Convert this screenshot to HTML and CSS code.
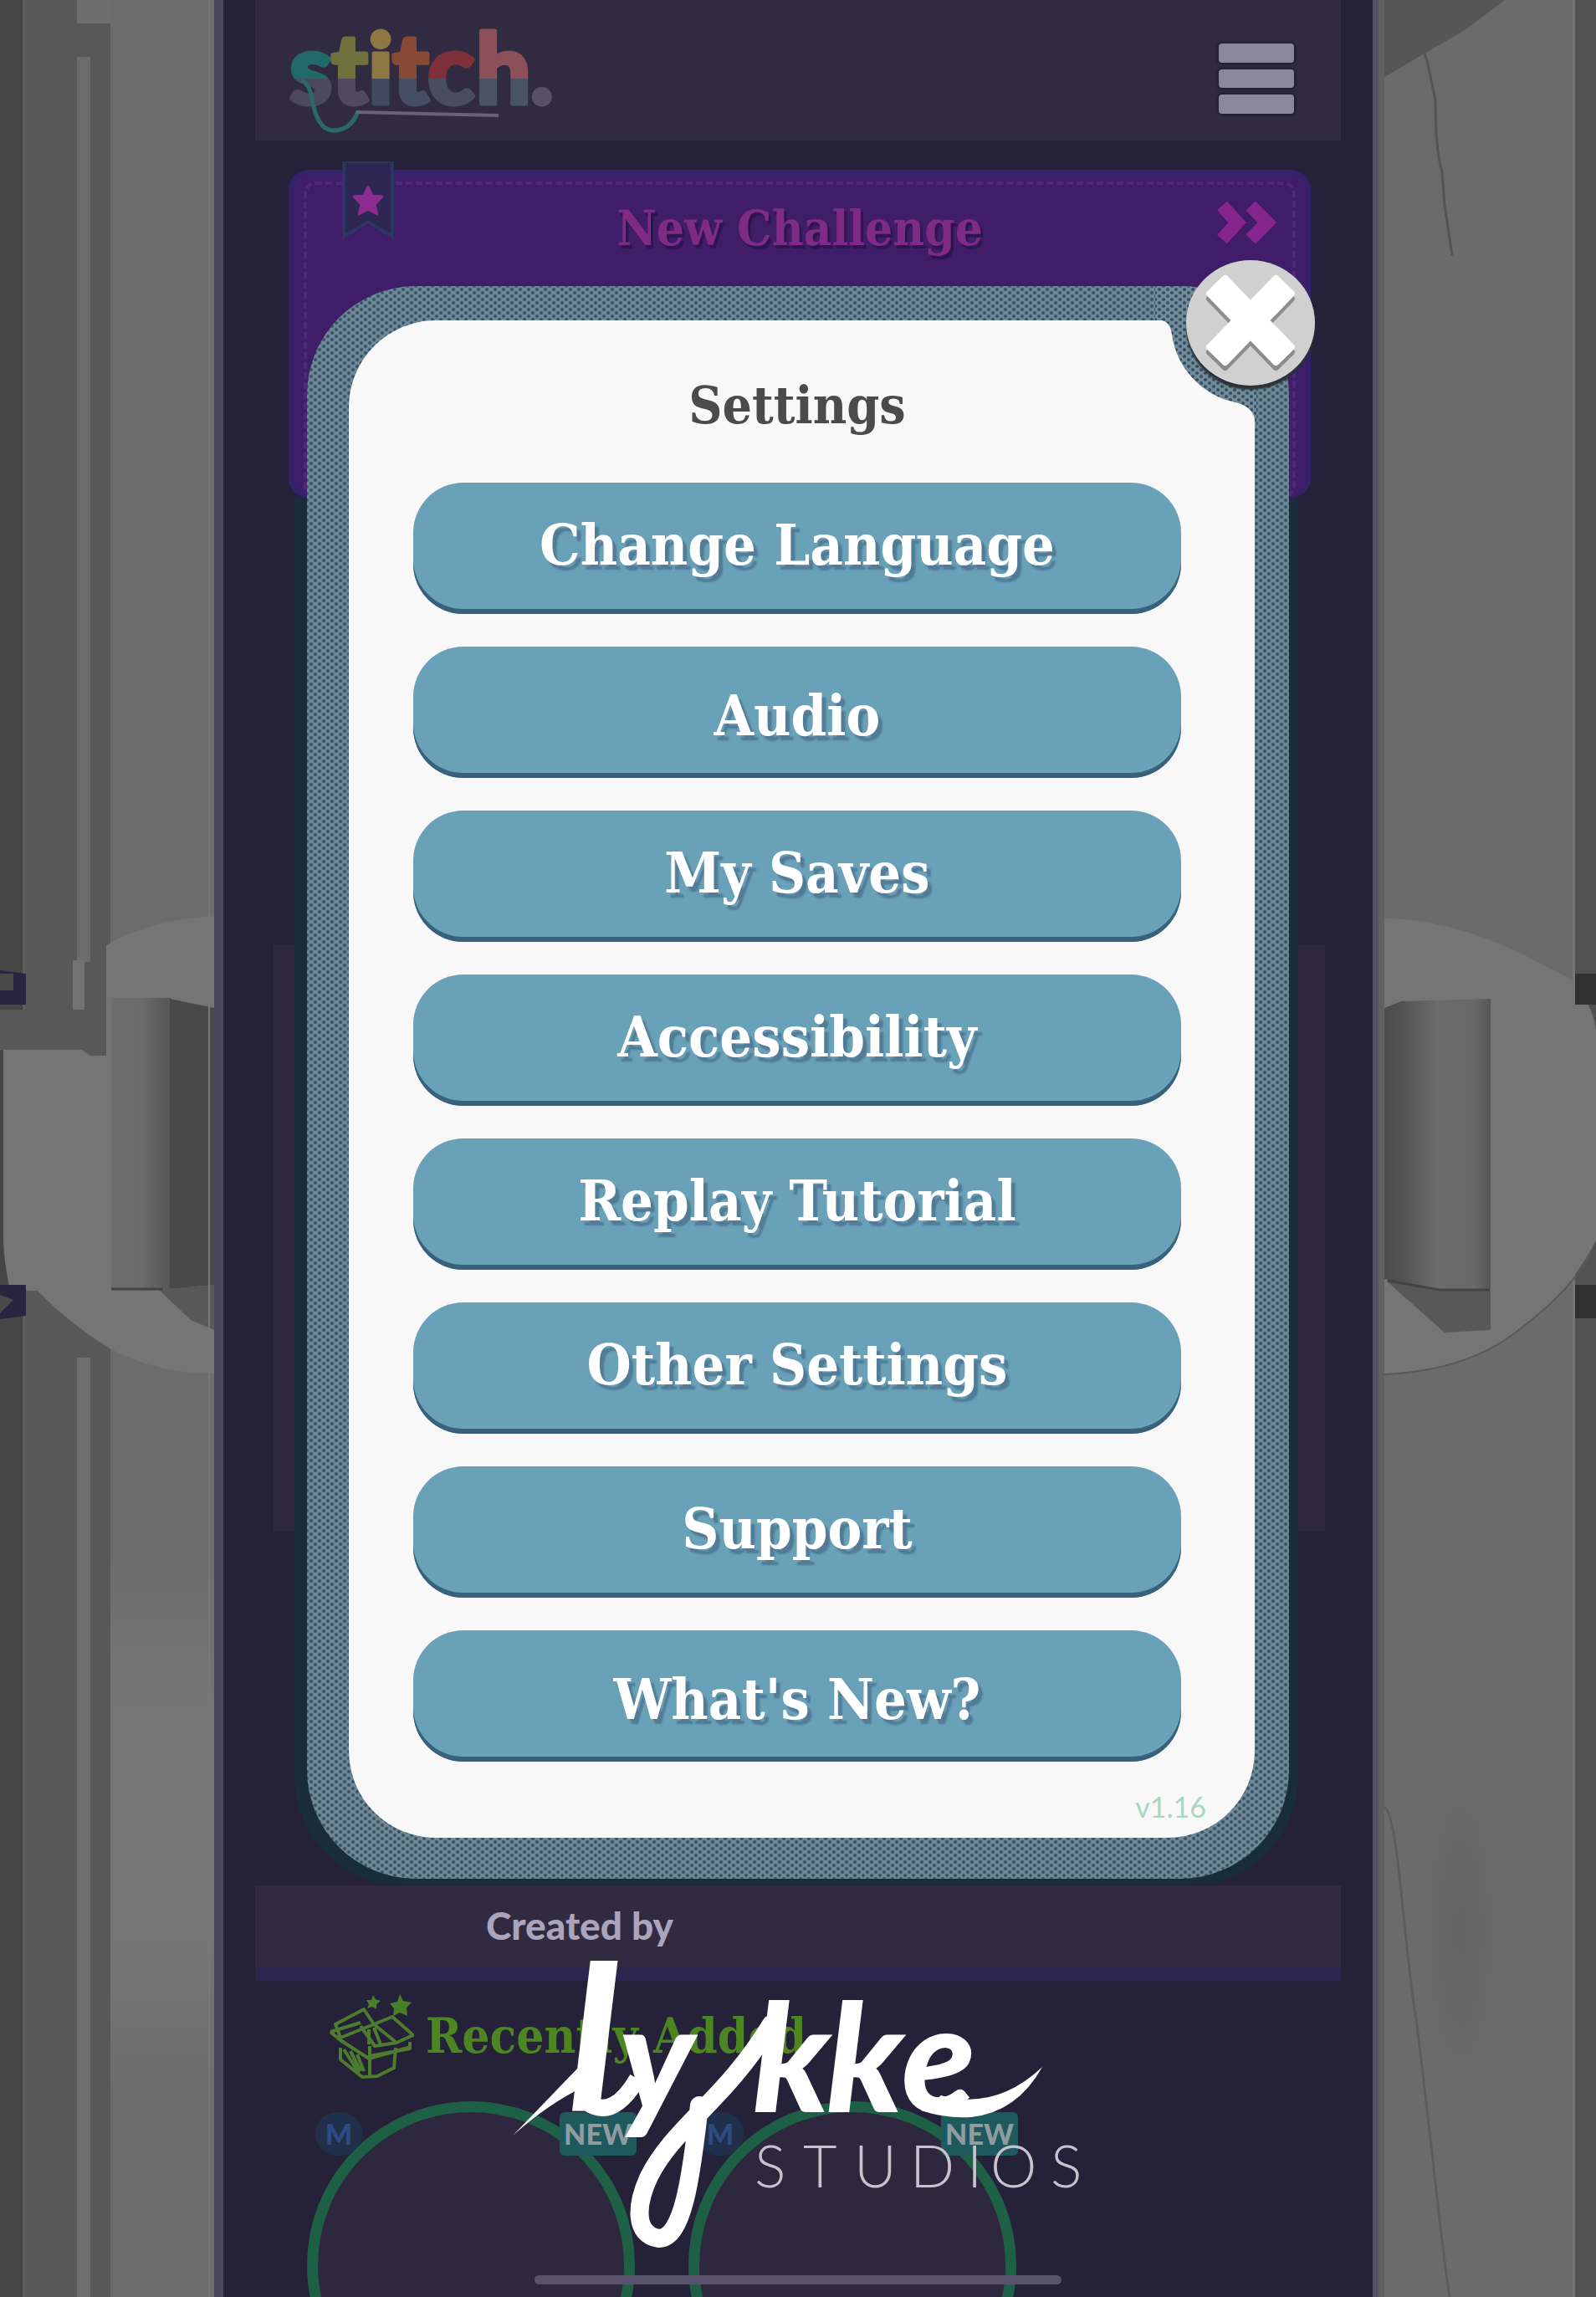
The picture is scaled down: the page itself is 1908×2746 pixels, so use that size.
FILE: index.html
```html
<!DOCTYPE html>
<html lang="en">
<head>
<meta charset="utf-8">
<meta name="viewport" content="width=device-width, initial-scale=1">
<title>stitch. – Settings</title>
<link rel="stylesheet" href="styles.css">
</head>
<body>
<div class="page">
  <svg class="scenery" viewBox="0 0 267 2746" preserveAspectRatio="xMaxYMid slice" aria-hidden="true">
    <defs>
      <linearGradient id="knobL" x1="0" x2="1"><stop offset="0" stop-color="#6e6e6e"/><stop offset=".5" stop-color="#6b6b6b"/><stop offset="1" stop-color="#565656"/></linearGradient>
      <linearGradient id="glow" x1="0" x2="0" y1="0" y2="1"><stop offset="0" stop-color="#757575" stop-opacity="0"/><stop offset=".3" stop-color="#757575"/><stop offset=".7" stop-color="#757575"/><stop offset="1" stop-color="#757575" stop-opacity="0"/></linearGradient>
    </defs>
    <rect width="267" height="2746" fill="#585858"/>
    <rect width="27" height="2746" fill="#454545"/>
    <rect x="27" width="3" height="2746" fill="#5e5e5e"/>
    <rect x="92" width="40" height="28" fill="#6e6e6e"/>
    <rect x="92" y="68" width="16" height="1082" fill="#6c6c6c"/>
    <rect x="87" y="1148" width="14" height="70" fill="#727272"/>
    <rect x="92" y="1623" width="16" height="1123" fill="#6f6f6f"/>
    <rect x="132" width="124" height="2746" fill="#6c6c6c"/>
    <rect x="132" y="1840" width="124" height="680" fill="url(#glow)"/>
    <rect y="1207" width="132" height="48" fill="#585858"/>
    <path d="M4 1255H98l10 7h19V1130q50-30 129-35V1642q-70 0-125-30Q80 1580 45 1543H12Q3 1500 4 1470z" fill="#757575"/>
    <rect x="133" y="1193" width="71" height="348" fill="url(#knobL)"/>
    <path d="M203 1194l53 11v331l-53 5z" fill="#494949"/>
    <path d="M190 1542l66-6v54l-28-12z" fill="#585858"/>
    <path d="M133 1541h62" stroke="#444" stroke-width="3"/>
    <path d="M0 1160l31 4v37H0z" fill="#292440"/><path d="M0 1164h16v20H0z" fill="#4a4a4a"/>
    <path d="M0 1536h31v37L0 1577z" fill="#292440"/><path d="M0 1548l16 6-16 16z" fill="#4a4a4a"/>
    <rect x="249" width="2" height="2746" fill="#777"/>
    <rect x="256" width="11" height="2746" fill="#4b4660"/>
  </svg>

  <main class="column">
    <div class="app">
      <header class="topbar">
        <svg class="brand" viewBox="0 0 330 136" role="img" aria-label="stitch.">
          <defs>
            <linearGradient id="c1" gradientUnits="userSpaceOnUse" x1="0" x2="0" y1="0" y2="110"><stop offset=".6" stop-color="#22696c"/><stop offset=".6" stop-color="#4c485e"/></linearGradient>
            <linearGradient id="c2" gradientUnits="userSpaceOnUse" x1="0" x2="0" y1="0" y2="110"><stop offset=".6" stop-color="#71713e"/><stop offset=".6" stop-color="#4f4a60"/></linearGradient>
            <linearGradient id="c3" gradientUnits="userSpaceOnUse" x1="0" x2="0" y1="0" y2="110"><stop offset=".6" stop-color="#8f7745"/><stop offset=".6" stop-color="#3f4a60"/></linearGradient>
            <linearGradient id="c4" gradientUnits="userSpaceOnUse" x1="0" x2="0" y1="0" y2="110"><stop offset=".6" stop-color="#884a35"/><stop offset=".6" stop-color="#464d64"/></linearGradient>
            <linearGradient id="c5" gradientUnits="userSpaceOnUse" x1="0" x2="0" y1="0" y2="110"><stop offset=".6" stop-color="#7f3038"/><stop offset=".6" stop-color="#4a4c62"/></linearGradient>
            <linearGradient id="c6" gradientUnits="userSpaceOnUse" x1="0" x2="0" y1="0" y2="110"><stop offset=".6" stop-color="#8d5058"/><stop offset=".6" stop-color="#4a5266"/></linearGradient>
          </defs>
          <text class="brand-text" y="96" x="4 54 98 127 169 227 292"><tspan fill="url(#c1)" stroke="url(#c1)">s</tspan><tspan fill="url(#c2)" stroke="url(#c2)">t</tspan><tspan fill="url(#c3)" stroke="url(#c3)">i</tspan><tspan fill="url(#c4)" stroke="url(#c4)">t</tspan><tspan fill="url(#c5)" stroke="url(#c5)">c</tspan><tspan fill="url(#c6)" stroke="url(#c6)">h</tspan><tspan fill="#57516a" stroke="#57516a">.</tspan></text>
          <path d="M18 68q10 4 13 22 6 36 24 38 22 1 31-23" fill="none" stroke="#2b686e" stroke-width="5"/>
          <path d="M84 106l170 4" stroke="#696278" stroke-width="4"/>
        </svg>
        <button class="menu-toggle" type="button" aria-label="Menu"><span></span><span></span><span></span></button>
      </header>

      <section class="challenge">
        <svg class="ribbon" viewBox="0 0 62 94" aria-hidden="true">
          <path d="M2 0v90l29-18 29 18V0z" fill="#2d2552" stroke="#2e3562" stroke-width="4"/>
          <path d="M31 30l5 11 12 1-9 9 3 12-11-6-11 6 3-12-9-9 12-1z" fill="#8a2c90" stroke="#8a2c90" stroke-width="3" stroke-linejoin="round"/>
        </svg>
        <h2 class="challenge-title">New Challenge</h2>
        <svg class="chevrons" viewBox="0 0 72 50" aria-hidden="true"><path d="M6 5l18 20L6 45M40 5l20 20-20 20" fill="none" stroke="#86268c" stroke-width="16"/></svg>
      </section>

      <div class="board"><div class="board-card"></div></div>
      <div class="strip"></div>

      <section class="recent">
        <h2 class="recent-title">
          <svg viewBox="0 0 102 104" aria-hidden="true" fill="none" stroke="#4d7c2e" stroke-width="4" stroke-linejoin="round">
            <path d="M8 38l34-18 12 18-40 16zM2 47l12 10 34 22 50-14M54 38l22-9 25 22-20 9zM54 38l27 22-26 4-17-24M2 47l36-11M49 64v38M14 66v14l26 21 18-1 20-10 2-24M49 76l48-9v-8M18 68l18 28M26 70l12 24M34 74l8 20M48 44v18M54 42l8 20"/>
            <path d="M85 2l4 8 10 2-6 6 1 10-9-4-8 4 1-9-5-6 9-2zM53 3l3 5 6 2-5 4 0 6-5-3-6 2 2-5-3-5h6z" fill="#4a7f2a" stroke="none"/>
          </svg>
          Recently Added
        </h2>
        <ul class="patterns">
          <li class="pattern"><span class="size">M</span><span class="new">NEW</span></li>
          <li class="pattern"><span class="size">M</span><span class="new">NEW</span></li>
        </ul>
      </section>
      <div class="home-bar"></div>
    </div>

    <div class="overlay">
      <section class="dialog" role="dialog" aria-labelledby="settings-title">
        <div class="dialog-body">
          <h1 id="settings-title" class="dialog-title">Settings</h1>
          <nav class="options">
            <button class="option" type="button">Change Language</button>
            <button class="option option-flat" type="button">Audio</button>
            <button class="option" type="button">My Saves</button>
            <button class="option" type="button">Accessibility</button>
            <button class="option" type="button">Replay Tutorial</button>
            <button class="option" type="button">Other Settings</button>
            <button class="option" type="button">Support</button>
            <button class="option option-flat" type="button">What's New?</button>
          </nav>
          <p class="version">v1.16</p>
        </div>
        <svg class="notch" viewBox="0 0 160 166" aria-hidden="true">
          <defs><pattern id="weave" width="10" height="8" patternUnits="userSpaceOnUse"><rect width="10" height="8" fill="#718b9b"/><ellipse cx="5" cy="4" rx="2" ry="2" fill="#344f60"/><path d="M0 0h2v1l-2 1zM10 0v2l-2-1v-1zM0 8V6l2 1v1zM10 8H8V7l2-1z" fill="#344f60"/></pattern></defs>
          <path d="M0 42V41H8Q18 43 20 58A96 96 0 0 0 92 138Q117 143 119 160V166H121V0H0z" fill="url(#weave)"/>
        </svg>
        <button class="close" type="button" aria-label="Close">
          <svg viewBox="0 0 154 150" aria-hidden="true">
            <g fill="#8c8c8c"><rect x="16" y="61" width="122" height="34" rx="4" transform="rotate(46 77 78)"/><rect x="16" y="61" width="122" height="34" rx="4" transform="rotate(-46 77 78)"/></g>
            <g fill="#fff"><rect x="16" y="55" width="122" height="34" rx="4" transform="rotate(46 77 72)"/><rect x="16" y="55" width="122" height="34" rx="4" transform="rotate(-46 77 72)"/></g>
          </svg>
        </button>
      </section>

      <footer class="credits">
        <p class="created">Created by</p>
        <svg class="studio" viewBox="0 0 700 350" role="img" aria-label="lykke studios">
          <g class="studio-script" fill="#fff">
            <text class="script-tall" x="80" y="186">l</text>
            <text class="script" y="188" x="140 300 388 478">ykke</text>
          </g>
          <path d="M13 216L92 134l14 20Q60 174 13 216z" fill="#fff"/>
          <path d="M104 178q30 18 58-30" fill="none" stroke="#fff" stroke-width="20"/>
          <path d="M236 180c-10 90-20 158-48 159-30-4-28-40-12-74 30-60 90-90 146-182" fill="none" stroke="#fff" stroke-width="22" stroke-linecap="round"/>
          <path d="M525 168q66 18 121-34-30 54-85 60-30 2-60-8z" fill="#fff"/>
          <text class="studio-caps" y="278" x="302 360 421 488 556 584 656">STUDIOS</text>
        </svg>
      </footer>
    </div>
  </main>

  <svg class="scenery" viewBox="0 0 267 2746" preserveAspectRatio="xMinYMid slice" aria-hidden="true">
    <defs>
      <linearGradient id="knobR" x1="0" x2="1"><stop offset="0" stop-color="#4c4c4c"/><stop offset=".2" stop-color="#555"/><stop offset=".5" stop-color="#6c6c6c"/><stop offset=".85" stop-color="#686868"/><stop offset="1" stop-color="#555"/></linearGradient>
      <radialGradient id="stain"><stop offset="0" stop-color="#636363"/><stop offset="1" stop-color="#636363" stop-opacity="0"/></radialGradient>
    </defs>
    <rect width="267" height="2746" fill="#6b6b6b"/>
    <rect x="242" width="25" height="2746" fill="#515151"/>
    <rect x="239" width="3" height="2746" fill="#757575"/>
    <path d="M0 0h158L110 36 14 92l-8 8H0z" fill="#565656"/>
    <path d="M56 0q2 60 9 72l10 48q0 60 8 85l3 40 9 60" fill="none" stroke="#555" stroke-width="3"/>
    <path d="M14 461q10 0 20 100t16 140 24 200 20 150" transform="translate(0 1700)" fill="none" stroke="#5c5c5c" stroke-width="3"/>
    <ellipse cx="105" cy="2310" rx="50" ry="210" fill="url(#stain)"/>
    <path d="M14 1098c50 0 110 15 170 45l58 30q25 40 25 60v250q-30 60-90 105-60 50-163 55z" fill="#757575"/>
    <path d="M14 1643q103-5 163-55 60-45 84-90" fill="none" stroke="#5a5a5a" stroke-width="2"/>
    <path d="M14 1205l20-8 107-3v347l-60 2-67-14z" fill="url(#knobR)"/>
    <path d="M16 1531l65 11h60v48l-55 3z" fill="#585858"/>
    <path d="M18 1531l62 11h60" fill="none" stroke="#444" stroke-width="3"/>
    <path d="M242 1164h25v37h-25zM242 1536h25v40h-25z" fill="#303030"/>
    <rect x="6" width="8" height="2746" fill="#616161"/>
    <rect width="7" height="2746" fill="#554f6c"/>
  </svg>
</div>
</body>
</html>
```
FILE: styles.css
```css
:root {
  --navy: #252138;
  --navy-soft: #302b40;
  --slab: "DejaVu Serif Condensed", "DejaVu Serif", serif;
  --sans: "Lato", "Open Sans", sans-serif;
}

* { box-sizing: border-box; }

body { margin: 0; background: var(--navy); }
h1, h2, p, ul { margin: 0; padding: 0; }
h1, h2 { font-family: var(--slab); font-weight: 700; }
button { border: 0; padding: 0; background: none; cursor: pointer; }
svg { display: block; }

.page {
  display: grid;
  grid-template-columns: 267px minmax(0, 1fr) 267px;
  min-height: 100vh;
}
.scenery { width: 100%; height: 100%; min-height: 0; }

.column { position: relative; background: var(--navy); }

/* App screen that stays visible behind the dialog */
.app { position: absolute; inset: 0; overflow: hidden; }

.topbar {
  display: flex;
  justify-content: space-between;
  height: 168px;
  margin: 0 38px 35px;
  padding: 28px 56px 0 37px;
  background: var(--navy-soft);
}
.brand { width: 330px; height: 136px; overflow: visible; }
.brand-text { font: 900 116px var(--sans); stroke-width: 5px; stroke-linejoin: round; }
.menu-toggle { display: flex; flex-direction: column; gap: 8px; width: 90px; height: 84px; margin-top: 24px; }
.menu-toggle span { width: 90px; height: 23px; border-radius: 4px; background: #8b879a; box-shadow: 0 0 3px 2px #221e30; }

.challenge {
  position: relative;
  height: 392px;
  margin: 0 74px 0 78px;
  padding: 34px 40px;
  border-radius: 24px;
  background: #3f1d68;
  box-shadow: inset 0 0 0 6px #33216a;
}
.challenge::before {
  content: "";
  position: absolute;
  inset: 14px 18px 0;
  border: 4px dashed #4d2a76;
  border-radius: 14px;
}
.ribbon { position: absolute; left: 64px; top: -10px; width: 62px; height: 94px; }
.chevrons { position: absolute; right: 40px; top: 38px; width: 72px; height: 50px; }
.challenge-title {
  font-size: 58px;
  line-height: 72px;
  text-align: center;
  color: #7f2b86;
  text-shadow: 3px 4px 1px #2c1650;
}

.board { height: 1659px; margin: 0 57px 0 60px; padding: 0 32px 0 25px; background: linear-gradient(var(--navy) 535px, #2d283e 535px, #2d283e 1235px, var(--navy) 1235px); }
.board-card { height: 100%; border-radius: 0 0 130px 130px; background: #182c3b; }
.strip { height: 114px; margin: 0 38px; background: var(--navy-soft); border-bottom: 16px solid #2c264f; }

.recent { padding: 14px 100px 0; }
.recent-title {
  display: flex;
  align-items: center;
  gap: 14px;
  height: 104px;
  padding-left: 26px;
  font-size: 58px;
  line-height: 58px;
  color: #4c8522;
  white-space: nowrap;
}
.recent-title svg { width: 102px; height: 104px; }
.patterns { display: flex; gap: 64px; margin-top: 26px; list-style: none; }
.pattern {
  position: relative;
  flex: none;
  width: 392px;
  height: 392px;
  border: 13px solid #1e6045;
  border-radius: 50%;
  background: #2d283e;
}
.size, .new { position: absolute; top: 0; height: 52px; font: 900 34px/52px var(--sans); text-align: center; }
.size { left: -3px; width: 56px; border-radius: 26px; background: #20304a; color: #2c4c84; }
.new { right: -15px; width: 92px; border-radius: 6px; background: #1d595d; color: #8f9b9f; }
.home-bar { position: absolute; left: 50%; bottom: 15px; width: 630px; height: 11px; margin-left: -315px; border-radius: 6px; background: #59526c; }

/* Dialog layer */
.overlay { position: relative; padding: 342px 100px 0; }
.dialog {
  position: relative;
  padding: 41px 41px 49px 50px;
  border-radius: 130px;
  background-color: #718b9b;
  background-image:
    radial-gradient(circle at 50% 50%, #344f60 1px, transparent 3px),
    radial-gradient(circle at 50% 50%, #344f60 1px, transparent 3px);
  background-size: 10px 8px;
  background-position: 0 0, 5px 4px;
}
.dialog-body {
  padding: 58px 88px 11px 77px;
  border-radius: 104px;
  background: #f8f8f8;
}
.dialog-title { font-size: 62px; line-height: 88px; text-align: center; color: #4b4b4b; }
.options { display: grid; gap: 39px; margin-top: 48px; }
.option {
  height: 157px;
  padding-bottom: 9px;
  border-radius: 60px;
  background: #68a1b8;
  box-shadow: inset 0 -6px 0 #38617c;
  color: #fff;
  font: 700 68px/1 var(--slab);
  text-shadow: 5px 6px 2px #527b96;
}
.option-flat { padding: 7px 0 0; }
.version { margin: 28px -30px 0 0; font: 400 34px/52px var(--sans); text-align: right; color: #a6d8c4; }

.notch { position: absolute; right: 0; top: 0; width: 160px; height: 166px; border-radius: 0 130px 0 0; }
.close {
  position: absolute;
  right: -31px;
  top: -31px;
  width: 154px;
  height: 150px;
  border-radius: 50%;
  background: #d0d0d0;
  box-shadow: 0 5px 2px #2c3238;
}
.close svg { width: 154px; height: 150px; }

.credits { padding: 26px 214px 0; }
.created { font: 900 46px/60px var(--sans); color: #aaa4bd; }
.studio { width: 700px; height: 350px; margin: 5px 0 0 19px; overflow: visible; }
.script { font: italic 900 180px var(--sans); }
.script-tall { font: italic 900 240px var(--sans); }
.studio-caps { font: 300 70px var(--sans); fill: #c8c2ce; }
```
